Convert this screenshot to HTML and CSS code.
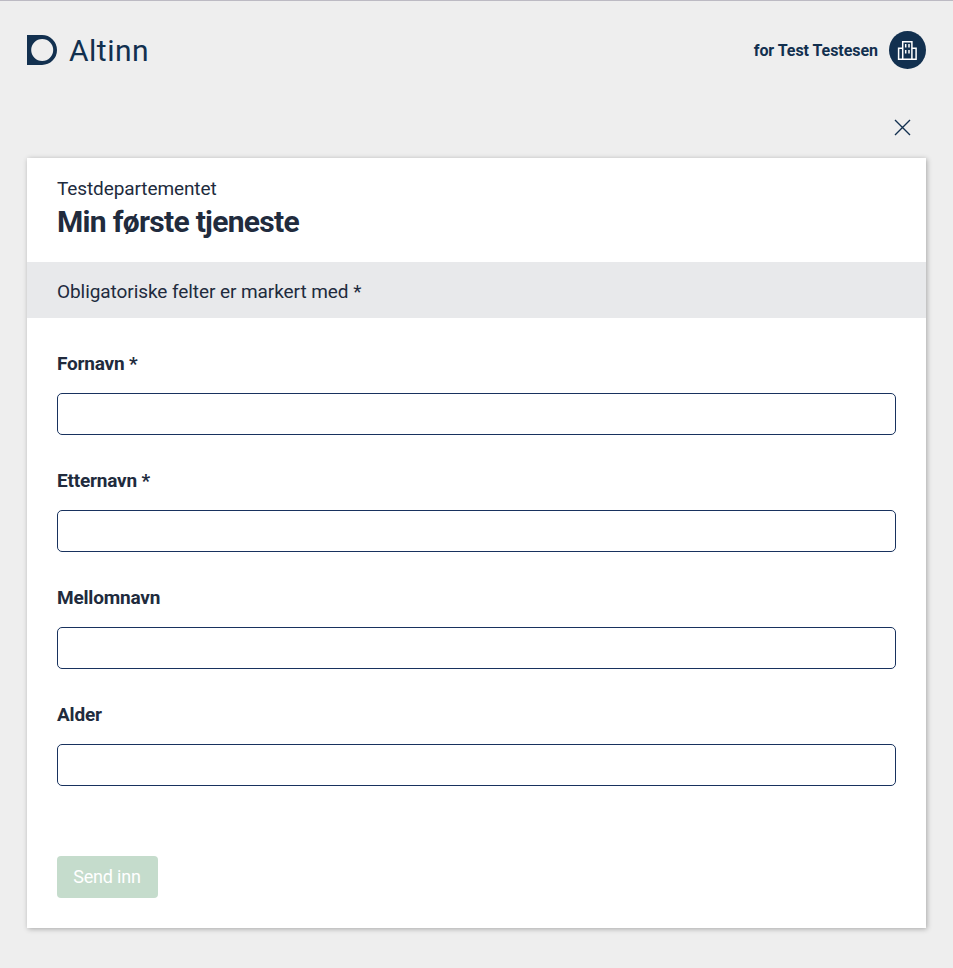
FILE: index.html
```html
<!DOCTYPE html>
<html lang="nb">
<head>
<meta charset="utf-8">
<title>Min første tjeneste</title>
<link rel="stylesheet" href="styles.css">
</head>
<body>
<header class="header">
  <a class="brand">
    <svg class="brand-mark" width="30" height="30" viewBox="0 0 30 30"><path fill="#12304f" fill-rule="evenodd" d="M0 0h15a15 15 0 0 1 0 30H0zM15.2 4a11 11 0 1 0 0 22 11 11 0 0 0 0-22z"/></svg>
    <span class="brand-name">Altinn</span>
  </a>
  <div class="user">
    <span class="user-name">for Test Testesen</span>
    <svg width="37" height="38" viewBox="0 0 37 38"><ellipse cx="18.5" cy="19" rx="18.5" ry="19" fill="#12304f"/><path fill="none" stroke="#fff" stroke-width="1.5" d="M13.7 28V10.7h9.2V28M13.7 17.2H9.6V28.2H27.1V17.2H22.9M13.7 28.2H27"/><path stroke="#fff" stroke-width="1.5" d="M16.7 13v3.4M20 13v3.4M16.7 19v3.4M20 19v3.4"/></svg>
  </div>
</header>
<div class="toolbar">
  <button class="close" aria-label="Lukk"><svg width="17" height="17" viewBox="0 0 17 17"><path d="M1 1l15 15M16 1L1 16" stroke="#12304f" stroke-width="1.4" fill="none"/></svg></button>
</div>
<main class="card">
  <div class="card-head">
    <p class="org">Testdepartementet</p>
    <h1 class="title">Min første tjeneste</h1>
  </div>
  <p class="notice">Obligatoriske felter er markert med *</p>
  <form class="form">
    <div class="field"><label for="fornavn">Fornavn *</label><input id="fornavn" type="text"></div>
    <div class="field"><label for="etternavn">Etternavn *</label><input id="etternavn" type="text"></div>
    <div class="field"><label for="mellomnavn">Mellomnavn</label><input id="mellomnavn" type="text"></div>
    <div class="field"><label for="alder">Alder</label><input id="alder" type="text"></div>
    <button class="submit" type="button">Send inn</button>
  </form>
</main>
</body>
</html>
```

FILE: styles.css
```css
* { box-sizing: border-box; }
body {
  margin: 0;
  min-height: 968px;
  border-top: 1px solid #bcbac3;
  padding: 0 27px;
  background: #eee;
  color: #212b3d;
  font-family: Roboto, sans-serif;
  font-size: 18px;
}
p, h1 { margin: 0; }
.header { display: flex; justify-content: space-between; align-items: center; height: 98px; }
.brand { display: flex; align-items: center; gap: 12px; color: #12304f; }
.brand-mark { display: block; }
.brand-name { padding-top: 1px; font-size: 30px; line-height: 34px; letter-spacing: .5px; }
.user { display: flex; align-items: center; gap: 11px; color: #12304f; }
.user svg { display: block; }
.user-name { font-size: 16px; font-weight: 700; letter-spacing: -.05px; }
.toolbar { display: flex; justify-content: flex-end; align-items: center; height: 59px; padding: 0 15px 2px 0; }
.close { display: flex; border: 0; padding: 0; background: none; }
.card { height: 770px; background: #fff; box-shadow: 1px 1px 5px rgba(0, 0, 0, .3); }
.card-head { height: 104px; padding: 18px 30px 0; }
.org { font-size: 19px; line-height: 26px; letter-spacing: -.1px; }
.title { font-size: 30px; line-height: 40px; font-weight: 700; letter-spacing: -.7px; }
.notice { height: 56px; padding: 0 30px; line-height: 60px; background: #e8e9eb; font-size: 19px; letter-spacing: -.07px; }
.form { padding: 33px 30px 0; }
.field { height: 117px; }
.field label { display: block; height: 42px; line-height: 26px; font-size: 19px; font-weight: 700; letter-spacing: -.2px; }
.field input { display: block; width: 100%; height: 42px; border: 1px solid #18325e; border-radius: 5px; background: #fff; padding: 0 12px; font: inherit; }
.submit { display: block; width: 101px; height: 42px; margin-top: 37px; border: 0; border-radius: 4px; padding: 0 1px 2px 0; background: #c5dccc; color: #fff; font: 18px Roboto, sans-serif; letter-spacing: -.2px; }
```
